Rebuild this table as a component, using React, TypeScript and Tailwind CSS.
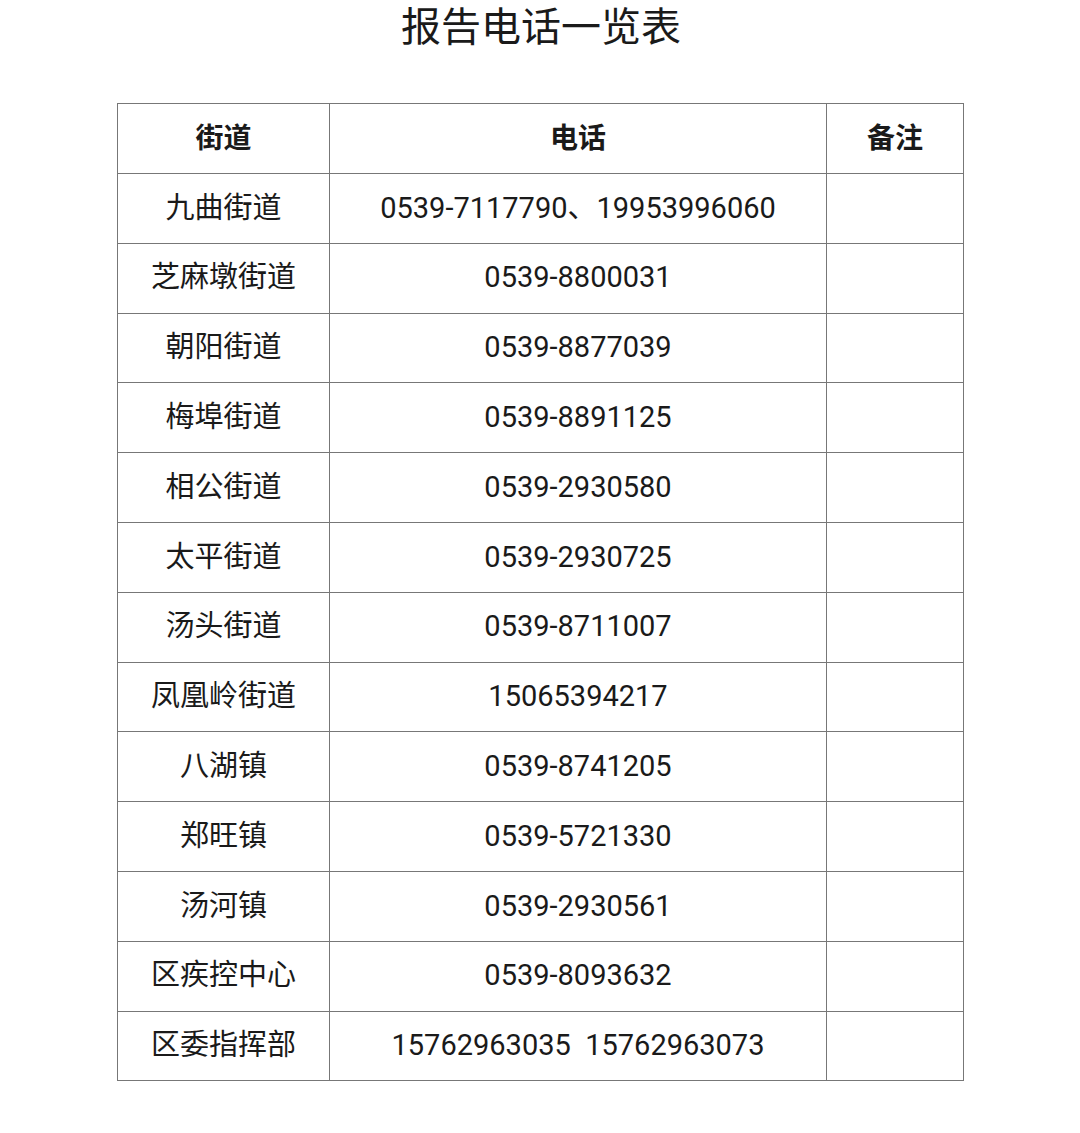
const rows: [string, string][] = [
  ['九曲街道', '0539-7117790、19953996060'],
  ['芝麻墩街道', '0539-8800031'],
  ['朝阳街道', '0539-8877039'],
  ['梅埠街道', '0539-8891125'],
  ['相公街道', '0539-2930580'],
  ['太平街道', '0539-2930725'],
  ['汤头街道', '0539-8711007'],
  ['凤凰岭街道', '15065394217'],
  ['八湖镇', '0539-8741205'],
  ['郑旺镇', '0539-5721330'],
  ['汤河镇', '0539-2930561'],
  ['区疾控中心', '0539-8093632'],
  ['区委指挥部', '15762963035  15762963073'],
]

const font = "font-['Roboto','Noto_Sans_CJK_SC',sans-serif]"

export default function App() {
  return (
    <div className={`w-[1080px] h-[1133px] bg-white text-[#1a1a1a] ${font}`}>
      {/* Title */}
      <h1 className="h-[56px] flex items-center justify-center text-[40px] leading-none font-normal pl-[2px]">
        报告电话一览表
      </h1>

      <div className="pt-[47px] pl-[117px]">
        <table className="border-collapse w-[846px] table-fixed">
          <colgroup>
            <col className="w-[212px]" />
            <col className="w-[497px]" />
            <col className="w-[137px]" />
          </colgroup>
          <thead>
            <tr className="h-[70px]">
              <th className="border border-[#777] text-[28px] font-bold">街道</th>
              <th className="border border-[#777] text-[28px] font-bold">电话</th>
              <th className="border border-[#777] text-[28px] font-bold">备注</th>
            </tr>
          </thead>
          <tbody>
            {rows.map(([name, phone]) => (
              <tr key={name} className="h-[69.8px]">
                <td className="border border-[#777] text-center text-[29px]">{name}</td>
                <td className="border border-[#777] text-center text-[29px] whitespace-pre">{phone}</td>
                <td className="border border-[#777]" />
              </tr>
            ))}
          </tbody>
        </table>
      </div>
    </div>
  )
}
